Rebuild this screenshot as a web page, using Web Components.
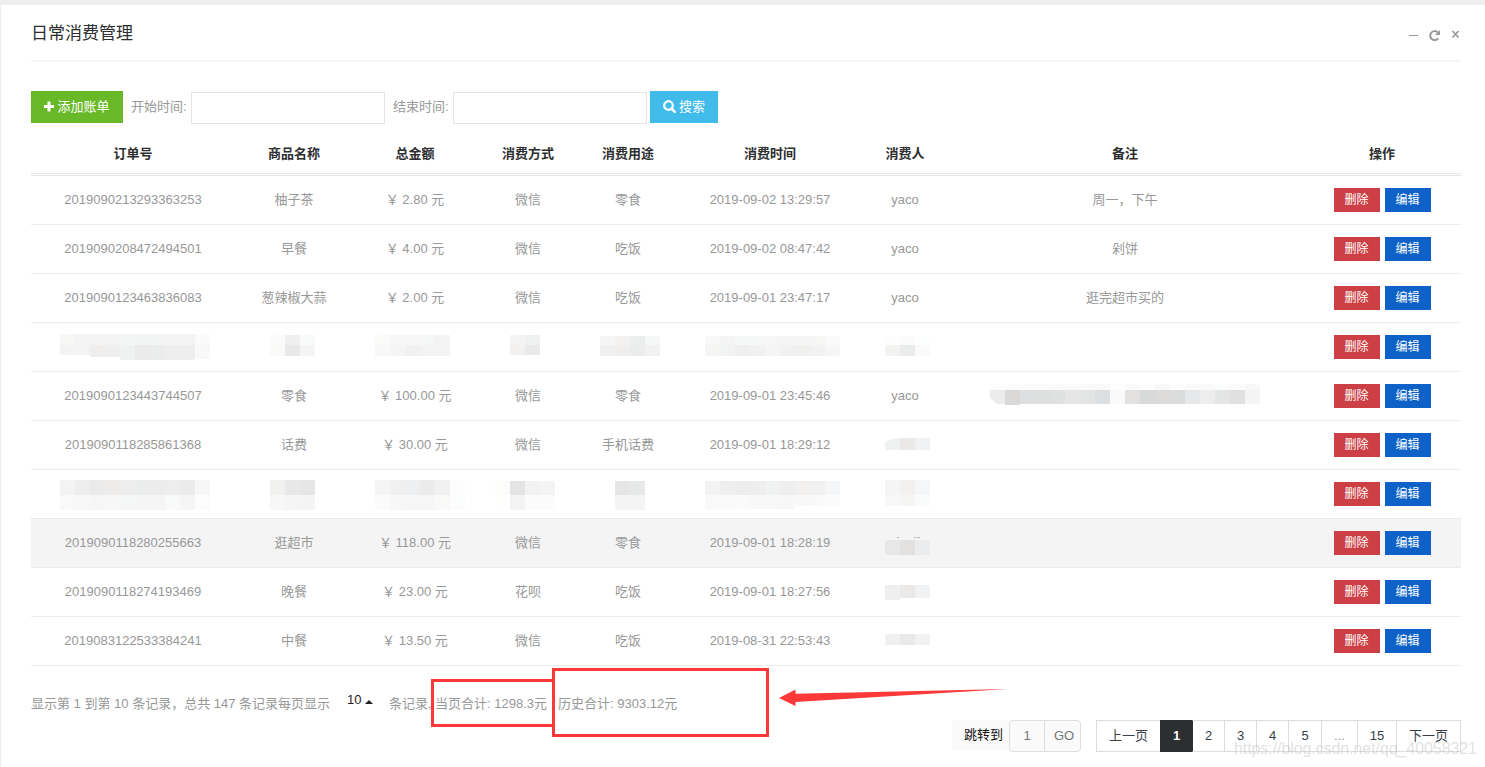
<!DOCTYPE html>
<html lang="zh-CN">
<head>
<meta charset="utf-8">
<title>日常消费管理</title>
<style>
  html { background: #eeeeee; }
  body {
    margin: 0;
    height: 767px;
    overflow: hidden;
    position: relative;
    font: 13px/18px "Liberation Sans", "Noto Sans CJK SC", sans-serif;
    color: #979898;
  }
</style>
</head>
<body>
<panel-box heading="日常消费管理">
  <search-bar></search-bar>
  <expense-table></expense-table>
  <table-footer></table-footer>
</panel-box>
<mark-layer></mark-layer>

<script>
function attach(el, html) {
  const template = document.createElement("template");
  template.innerHTML = html;
  el.attachShadow({ mode: "open" }).appendChild(template.content.cloneNode(true));
}

// Panel with title and window tools
class PanelBox extends HTMLElement {
  constructor() {
    super();
    attach(this, `
      <style>
        :host {
          display: block;
          box-sizing: border-box;
          height: 762px;
          margin: 5px 0 0 1px;
          padding: 0 24px 0 30px;
          background: #fff;
        }
        header {
          display: flex;
          justify-content: space-between;
          box-sizing: border-box;
          height: 57px;
          border-bottom: 2px solid #f5f5f5;
          margin-bottom: 29px;
        }
        h3 {
          margin: 16px 0 0;
          font-size: 17px;
          line-height: 26px;
          font-weight: 400;
          color: #2c2e2f;
        }
        svg { display: block; margin: 23px 0 0; }
      </style>
      <header>
        <h3></h3>
        <svg width="54" height="16" viewBox="0 0 54 16">
          <path d="M2 7.5h9" stroke="#979898" fill="none"/>
          <path d="M30.8 4.400A4.500 4.500 0 1 0 31.200 10.400" stroke="#979898" stroke-width="2" fill="none"/>
          <path d="M33 2v5h-5z" fill="#979898"/>
          <path d="M45.500 3l6 6.500M51.500 3l-6 6.500" stroke="#979898" stroke-width="1.700" fill="none"/>
        </svg>
      </header>
      <slot></slot>
    `);
    this.shadowRoot.querySelector("h3").textContent = this.getAttribute("heading");
  }
}

class ColorButton extends HTMLElement {
  constructor() {
    super();
    attach(this, `
      <style>
        :host {
          display: inline-flex;
          align-items: center;
          justify-content: center;
          box-sizing: border-box;
          height: 32px;
          padding-bottom: 1px;
          color: #fff;
          background: #68b828;
        }
        :host([kind="info"]) { background: #40bbea; }
        :host([kind="danger"]) { background: #cc3f44; }
        :host([kind="edit"]) { background: #0e62c7; }
        :host([small]) { width: 46px; height: 24px; padding: 0; font-size: 12px; }
      </style>
      <slot></slot>
    `);
  }
}

class SearchBar extends HTMLElement {
  constructor() {
    super();
    attach(this, `
      <style>
        :host { display: flex; align-items: flex-start; height: 42px; }
        label { line-height: 31px; width: 60px; margin-left: 8px; white-space: nowrap; }
        input {
          box-sizing: border-box;
          width: 194px;
          height: 32px;
          margin: 1px 0 0;
          padding: 0 8px;
          border: 1px solid #e4e4e4;
          background: #fff;
        }
        .add { width: 92px; }
        .find { width: 68px; margin-left: 3px; }
        svg { margin: 0 3px 1px 0; }
      </style>
      <color-button class="add">
        <svg width="10" height="11" viewBox="0 0 10 11"><path d="M3.500 .5h3V4H10v3H6.500v3.500h-3V7H0V4h3.500z" fill="#fff"/></svg>添加账单
      </color-button>
      <label>开始时间:</label><input>
      <label>结束时间:</label><input>
      <color-button class="find" kind="info">
        <svg width="13" height="13" viewBox="0 0 13 13"><circle cx="5.500" cy="5.500" r="4.300" stroke="#fff" stroke-width="2.200" fill="none"/><path d="M8.500 8.500l3.300 3.300" stroke="#fff" stroke-width="2.600" stroke-linecap="round"/></svg>搜索
      </color-button>
    `);
  }
}

class ExpenseRow extends HTMLElement {
  constructor() {
    super();
    attach(this, `
      <style>
        :host {
          display: grid;
          grid-template-columns: 204px 118px 124px 102px 98px 186px 84px 356px 158px;
          align-items: center;
          text-align: center;
          box-sizing: border-box;
          width: 1430px;
          height: 49px;
          border-bottom: 1px solid #ebebeb;
        }
        :host([head]) {
          height: 43px;
          padding-top: 1px;
          border-bottom: 3px double #e6e6e6;
          font-weight: 700;
          color: #2c2e2f;
        }
        :host([active]) { background: #f4f4f4; }
        ::slotted(span) { white-space: pre; }
        ::slotted(div) { display: flex; justify-content: center; gap: 5px; }
      </style>
      <slot></slot>
    `);
  }
}

const columns = ["订单号", "商品名称", "总金额", "消费方式", "消费用途", "消费时间", "消费人", "备注", "操作"];
const records = [
  ["2019090213293363253", "柚子茶", "￥ 2.80 元", "微信", "零食", "2019-09-02 13:29:57", "yaco", "周一，下午"],
  ["2019090208472494501", "早餐", "￥ 4.00 元", "微信", "吃饭", "2019-09-02 08:47:42", "yaco", "剁饼"],
  ["2019090123463836083", "葱辣椒大蒜", "￥ 2.00 元", "微信", "吃饭", "2019-09-01 23:47:17", "yaco", "逛完超市买的"],
  ["", "", "", "", "", "", "", ""],
  ["2019090123443744507", "零食", "￥ 100.00 元", "微信", "零食", "2019-09-01 23:45:46", "yaco", ""],
  ["2019090118285861368", "话费", "￥ 30.00 元", "微信", "手机话费", "2019-09-01 18:29:12", "", ""],
  ["", "", "", "", "", "", "", ""],
  ["2019090118280255663", "逛超市", "￥ 118.00 元", "微信", "零食", "2019-09-01 18:28:19", "", ""],
  ["2019090118274193469", "晚餐", "￥ 23.00 元", "花呗", "吃饭", "2019-09-01 18:27:56", "", ""],
  ["2019083122533384241", "中餐", "￥ 13.50 元", "微信", "吃饭", "2019-08-31 22:53:43", "", ""]
];

class ExpenseTable extends HTMLElement {
  constructor() {
    super();
    const cells = (list) => list.map((text) => `<span>${text}</span>`).join("");
    const actions = `<div><color-button small kind="danger">删除</color-button><color-button small kind="edit">编辑</color-button></div>`;
    attach(this, `
      <style>:host { display: block; }</style>
      <expense-row head>${cells(columns)}</expense-row>
      ${records.map((r, i) => `<expense-row ${i === 7 ? "active" : ""}>${cells(r)}${actions}</expense-row>`).join("")}
    `);
  }
}

class PageLinks extends HTMLElement {
  constructor() {
    super();
    const pages = [["上一页", 64], ["1", 32], ["2", 32], ["3", 32], ["4", 32], ["5", 33], ["...", 36], ["15", 39], ["下一页", 65]];
    attach(this, `
      <style>
        :host { display: flex; height: 32px; }
        a {
          box-sizing: border-box;
          border: 1px solid #ddd;
          border-right: 0;
          line-height: 30px;
          text-align: center;
          color: #373e4a;
        }
        a:last-child { border-right: 1px solid #ddd; }
        .on { background: #2c2e2f; border-color: #2c2e2f; color: #fff; font-weight: 700; }
        .on + a { border-left-color: #2c2e2f; }
        .off { color: #979898; }
      </style>
      ${pages.map(([t, w]) => `<a class="${t === "1" ? "on" : t === "..." ? "off" : ""}" style="width:${w}px">${t}</a>`).join("")}
    `);
  }
}

class TableFooter extends HTMLElement {
  constructor() {
    super();
    attach(this, `
      <style>
        :host { display: block; }
        .info { display: flex; height: 54px; line-height: 18px; padding-top: 29px; box-sizing: border-box; white-space: pre; }
        .count { width: 316px; }
        .size { width: 42px; color: #222; margin-top: -4px; }
        .size svg { margin-left: 4px; vertical-align: 0; }
        .rest { width: 46px; }
        .page-sum { width: 123px; }
        .pages { display: flex; justify-content: flex-end; width: 1430px; }
        .jump {
          box-sizing: border-box;
          width: 57px;
          height: 30px;
          padding-left: 12px;
          line-height: 29px;
          color: #111;
          background: #fafafa;
        }
        .go {
          display: flex;
          box-sizing: border-box;
          width: 72px;
          height: 32px;
          margin-right: 15px;
          border: 1px solid #ddd;
          border-radius: 4px;
          background: #fafafa;
          line-height: 29px;
          text-align: center;
          color: #777;
        }
        .go span { width: 34px; }
        .go b { flex: 1; padding-left: 3px; border-left: 1px solid #ddd; font-weight: 400; }
      </style>
      <div class="info"><span class="count">显示第 1 到第 10 条记录，总共 147 条记录每页显示</span><span class="size">10<svg width="8" height="4" viewBox="0 0 8 4"><path d="M0 4L4 0L8 4z" fill="#222"/></svg></span><span class="rest">条记录,</span><span class="page-sum">当页合计: 1298.3元</span><span>历史合计: 9303.12元</span></div>
      <div class="pages">
        <span class="jump">跳转到</span>
        <div class="go"><span>1</span><b>GO</b></div>
        <page-links></page-links>
      </div>
    `);
  }
}

// Mosaic strips: x, y, height, one colour per 15px block
const mosaics = [
  [60, 334, 11, "f7f7f5 f4f4f4 f3f3f3 f3f3f3 f4f5f5 f3f4f4 f2f5f4 f3f3f3 f3f3f3 fafafa"],
  [60, 345, 10, "f3f3f3 f3f3f3"],
  [90, 345, 12, "efeeec efefef"],
  [120, 345, 15, "f0f2f2 ebebeb ebeded eeeeee eeeeee"],
  [195, 345, 14, "f8f8f8"],
  [270, 335, 10, "fbfbfb efefef f9fbfa"],
  [270, 345, 11, "fafaf9 e9e9e9 f5f5f5"],
  [375, 335, 10, "fbfbf9 f7f7f7 f7f7f7 f4f7f6 f3f3f3"],
  [375, 345, 11, "f8f8f8 f5f5f5 f1f1f1 f3f3f3 f3f3f3"],
  [510, 335, 10, "f3f3f3 eff1f0"],
  [510, 345, 10, "f2f1ef e9e9e9"],
  [600, 336, 9, "f5f5f5 f3f2f0 eceeed f6f8f7"],
  [600, 345, 11, "f0f0f0 efeeec ebedec f2f2f2"],
  [705, 336, 9, "f8f8f8 f4f4f4 f6f7f7 f6f7f7 f6f6f6 f5f5f5 f5f5f5 f6f6f4 fafafa"],
  [705, 345, 11, "f5f5f3 f2f4f3 efefef f1f1f1 f5f5f5 f1f1f1 f0f0ee f2f2f2 f6f6f6"],
  [885, 336, 9, "fdfdfd fbfbfb fdfefe"],
  [885, 345, 11, "f3f3f1 ebedec fafafa"],
  [990, 384, 6, "fdfdfd fbfbfb fbfbfb fafafa fafafa fafafa fafafa f9f9f9 fefefe fafafa fdfdfb f8f8f8 fcfcfa fafafa f9f9f9 fbfdfc fbfbfb f8f8f8"],
  [1005, 390, 15, "dad9d7"],
  [1020, 390, 14, "dddfe0 dddfdf dfe1e0 e6e6e6 e3e4e4 dcdfe1 fafafa e2e1df d7dad8 dcdbd9 d9dcdb e5e7e9 ededed e4e6e5 e0e0e0 f4f4f4"],
  [60, 480, 15, "f3f3f3 eeeeee eaeaea eeecea ecedec ebedec ececec ecedec ebebeb f7f7f7"],
  [60, 495, 15, "f9f9f9 f8f8f8 f6f6f6 f7f7f7 f5f7f6 f5f5f5 f5f5f5 f7faf9 f5f5f5 fcfcfc"],
  [270, 480, 15, "f1f1ef e8e8e8 e6e6e6"],
  [270, 495, 15, "f7f7f7 f5f5f5 f4f4f4"],
  [375, 480, 15, "f5f5f5 f0f0f0 eeeff1 ebebeb f1f1f1 fdfdfd"],
  [375, 495, 15, "fbfbfb f7f7f7 f6f6f6 f6f6f6 f9f9f7 fbfdfc"],
  [495, 481, 14, "fcfcfa e4e4e4 f2f2f2 f4f4f4"],
  [495, 495, 15, "fefefc f3f3f3 fbfbfb fbfbfb"],
  [615, 481, 14, "e6e6e6 e7e9e8"],
  [615, 495, 15, "f4f4f4 f4f4f4"],
  [705, 481, 14, "f3f3f3 efefef ededed eeeeee f1f3f2 eeeeee f2f1ef f1f1f1 f5f6f8"],
  [705, 495, 14, "f9f9f9 f9f9f9 fafafa f8f8f8 f8f8f8 f7f7f7"],
  [795, 495, 11, "f8f8f8 f9f9f9 fbfbfb"],
  [885, 480, 15, "f5f5f5 f2f1ef f5f6f8"],
  [885, 495, 11, "f8f8f8 f5f5f3 fafcfb"],
  [900, 438, 12, "eae9e7 f1f2f4"],
  [900, 540, 15, "e2e1df ebecee"],
  [885, 585, 15, "efefef"],
  [900, 585, 13, "eae9e7 f1f2f4"],
  [885, 634, 11, "f0f0f0 eae9e7 f1f2f4"]
];

// Marks drawn over the page: mosaic, frames, arrow, watermark
class MarkLayer extends HTMLElement {
  constructor() {
    super();
    const blocks = mosaics.map(([x, y, h, fills]) =>
      fills.split(" ").map((c, i) => `<rect x="${x + i * 15}" y="${y}" width="15" height="${h}" fill="#${c}"/>`).join("")
    ).join("");
    attach(this, `
      <style>
        :host { display: block; position: absolute; left: 0; top: 0; pointer-events: none; }
        svg { display: block; }
      </style>
      <svg width="1485" height="767" viewBox="0 0 1485 767">
        <g shape-rendering="crispEdges">${blocks}</g>
        <path d="M900 438v12h-15v-7q3-4 8-4z" fill="#eff0f0"/>
        <path d="M900 540v15h-13l-2-3v-10l3-2z" fill="#e7e7e7"/>
        <path d="M1005 390v14h-8l-7-6v-8z" fill="#ececec"/>
        <path d="M897 537.500h2M914 537.500h2M917 537.500h3" stroke="#b5b5b5"/>
        <g fill="none" stroke="#fc3838" stroke-width="3">
          <rect x="432.500" y="680.500" width="121" height="45"/>
          <rect x="553.500" y="669.500" width="214" height="66"/>
        </g>
        <path d="M779 698L795.500 689.500V693.800L1008 689L795.500 702V706z" fill="#fc3838"/>
        <text x="1234" y="754" textLength="243" font-size="16" fill="#b4b4b4" fill-opacity=".4">https://blog.csdn.net/qq_40058321</text>
      </svg>
    `);
  }
}

customElements.define("color-button", ColorButton);
customElements.define("search-bar", SearchBar);
customElements.define("expense-row", ExpenseRow);
customElements.define("expense-table", ExpenseTable);
customElements.define("page-links", PageLinks);
customElements.define("table-footer", TableFooter);
customElements.define("panel-box", PanelBox);
customElements.define("mark-layer", MarkLayer);
</script>
</body>
</html>
